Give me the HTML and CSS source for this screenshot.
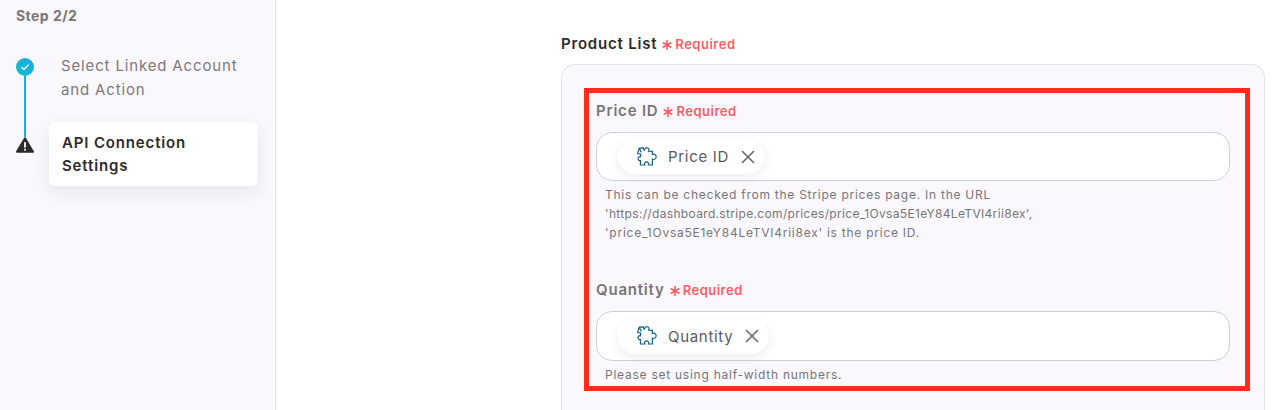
FILE: index.html

```html
<!DOCTYPE html>
<html lang="en">
  <head>
    <meta charset="UTF-8" />
    <title>API Connection Settings</title>
    <link rel="stylesheet" href="styles.css">
  </head>
  <body>
    <svg class="defs" width="0" height="0">
      <symbol id="puzzle" viewBox="0 0 20 20">
        <path d="M2.2 1.2 L6.4 .9 L7 3.2 C7.3 4.4 7.4 .6 9.8 .6 C12.2 .6 12.2 3 11.6 4.2 L15.4 4.4 L15.4 7.4 C16.2 6.8 19.2 7 19.2 9.8 C19.2 12.4 16.2 12.8 15.4 12.2 L15.4 18 L11.4 18 C12 16.6 11.2 14.8 9.6 14.8 C8 14.8 7.2 16.6 7.8 18 L3.4 18 L3.4 13.6 C2.4 14 1 13 1 11.6 C1 10.4 2.4 9.4 3.4 9.8 L3.8 7.2 L.6 6.6 Z M2.2 1.2 L4.4 5.4" />
      </symbol>
      <symbol id="star" viewBox="0 0 10 10">
        <path d="M5 0 V10 M.7 2.5 L9.3 7.5 M9.3 2.5 L.7 7.5" />
      </symbol>
    </svg>
    <aside class="sidebar">
      <div class="step-title">Step 2/2</div>
      <div class="steps">
        <div class="step step-done">
          <div class="marker">
            <span class="check">
              <svg viewBox="0 0 12 12" width="12" height="12"><path d="M2.5 6.3 L5 8.6 L9.5 3.6" /></svg>
            </span>
            <span class="line"></span>
          </div>
          <div class="step-text">Select Linked Account and Action</div>
        </div>
        <div class="step">
          <div class="marker">
            <svg class="warn" viewBox="0 0 18 16" width="18" height="16">
              <path d="M9 1.2 L17 14.8 L1 14.8 Z" />
              <rect x="8.1" y="5.2" width="1.8" height="5.4" />
              <rect x="8.1" y="11.8" width="1.8" height="1.8" />
            </svg>
          </div>
          <div class="step-card">API Connection Settings</div>
        </div>
      </div>
    </aside>
    <main class="main">
      <div class="label label-dark">Product List <span class="required"><svg class="star"><use href="#star" /></svg>Required</span></div>
      <div class="panel">
        <div class="highlight">
          <div class="field">
            <div class="label">Price ID <span class="required"><svg class="star"><use href="#star" /></svg>Required</span></div>
            <div class="input">
              <span class="chip">
                <svg class="puzzle"><use href="#puzzle" /></svg>
                <span>Price ID</span>
                <svg class="close" viewBox="0 0 14 14"><path d="M1 1 L13 13 M13 1 L1 13" /></svg>
              </span>
            </div>
            <p class="help">This can be checked from the Stripe prices page. In the URL<br><span class="help-url">'https://dashboard.stripe.com/prices/price_1Ovsa5E1eY84LeTVI4rii8ex',</span><br>'price_1Ovsa5E1eY84LeTVI4rii8ex' is the price ID.</p>
          </div>
          <div class="field">
            <div class="label">Quantity <span class="required"><svg class="star"><use href="#star" /></svg>Required</span></div>
            <div class="input">
              <span class="chip">
                <svg class="puzzle"><use href="#puzzle" /></svg>
                <span>Quantity</span>
                <svg class="close" viewBox="0 0 14 14"><path d="M1 1 L13 13 M13 1 L1 13" /></svg>
              </span>
            </div>
            <p class="help">Please set using half-width numbers.</p>
          </div>
        </div>
      </div>
    </main>
  </body>
</html>
```

FILE: styles.css

```css
body {
  margin: 0;
  display: flex;
  height: 410px;
  overflow: hidden;
  background: #fff;
  font-family: Inter, "Noto Sans", sans-serif;
  color: #2b2b2e;
}
.defs {
  position: absolute;
}

/* sidebar */
.sidebar {
  width: 275px;
  flex-shrink: 0;
  background: #faf8fc;
  border-right: 1px solid #e5e3e9;
}
.step-title {
  margin: 6px 0 0 16px;
  font-size: 14px;
  line-height: 20px;
  font-weight: 700;
  letter-spacing: 0.45px;
  color: #77757a;
}
.steps {
  margin: 32px 0 0 16px;
}
.step {
  display: flex;
}
.marker {
  width: 18px;
  flex-shrink: 0;
  display: flex;
  flex-direction: column;
  align-items: center;
}
.check {
  width: 18px;
  height: 18px;
  flex-shrink: 0;
  border-radius: 50%;
  background: linear-gradient(45deg, #0fc0cc, #1fa8e2);
  display: flex;
  align-items: center;
  justify-content: center;
}
.check path {
  fill: none;
  stroke: #fff;
  stroke-width: 1.4;
}
.line {
  width: 2px;
  flex: 1;
  background: #13b5d6;
}
.step-done {
  height: 79px;
}
.step-text {
  margin: -4px 0 0 27px;
  width: 190px;
  font-size: 15px;
  line-height: 24px;
  letter-spacing: 0.85px;
  color: #7b797e;
}
.warn {
  display: block;
  fill: #2b2b2e;
}
.warn path {
  stroke: #2b2b2e;
  stroke-width: 2;
  stroke-linejoin: round;
}
.warn rect {
  fill: #fff;
}
.step-card {
  margin: -15px 0 0 15px;
  width: 209px;
  height: 64px;
  box-sizing: border-box;
  padding: 9px 50px 9px 13px;
  background: #fff;
  border-radius: 6px;
  box-shadow: 0 6px 16px rgba(70, 60, 90, 0.1);
  font-size: 15px;
  line-height: 23px;
  font-weight: 600;
  letter-spacing: 0.85px;
  color: #2b2b2e;
}

/* main */
.main {
  flex: 1;
  min-width: 0;
  display: flex;
  flex-direction: column;
  padding: 34px 22px 0 285px;
}
.label {
  display: flex;
  align-items: center;
  gap: 5px;
  font-size: 15px;
  line-height: 20px;
  font-weight: 600;
  letter-spacing: 0.8px;
  color: #77757a;
}
.label-dark {
  color: #2b2b2e;
}
.required {
  display: flex;
  align-items: center;
  font-size: 13px;
  font-weight: 600;
  letter-spacing: 0.5px;
  color: #ff5c66;
}
.star {
  width: 10px;
  height: 10px;
  margin: 2px 3px 0 0;
  fill: none;
  stroke: #ff5c66;
  stroke-width: 1.6;
}
.panel {
  flex: 1;
  margin-top: 10px;
  padding: 23px 14px 0 22px;
  background: #faf8fc;
  border: 1px solid #e5e3e9;
  border-bottom: 0;
  border-radius: 14px 14px 0 0;
}
.highlight {
  height: 303px;
  box-sizing: border-box;
  padding: 8px 15px 0 7px;
  border: 5px solid #ff2d1c;
}
.field:first-child {
  height: 179px;
}
.input {
  margin-top: 11px;
  height: 49px;
  box-sizing: border-box;
  padding: 6px 21px;
  display: flex;
  align-items: center;
  background: #fff;
  border: 1px solid #d1cfd6;
  border-radius: 16px;
}
.field + .field .input {
  height: 50px;
}
.chip {
  display: flex;
  align-items: center;
  height: 35px;
  padding: 0 10px 0 19px;
  background: #fff;
  border-radius: 18px;
  box-shadow: 0 3px 10px rgba(70, 60, 90, 0.1);
  font-size: 15px;
  letter-spacing: 0.7px;
  color: #5a595e;
}
.puzzle {
  width: 20px;
  height: 20px;
  margin-right: 11px;
  fill: none;
  stroke: #17637e;
  stroke-width: 1.2;
}
.close {
  width: 14px;
  height: 14px;
  margin-left: 12px;
  fill: none;
  stroke: #68676c;
  stroke-width: 1.6;
}
.help {
  margin: 4px 0 0 9px;
  font-size: 12px;
  line-height: 19px;
  letter-spacing: 0.75px;
  color: #77757a;
}
.help-url {
  letter-spacing: 0.33px;
}
```
